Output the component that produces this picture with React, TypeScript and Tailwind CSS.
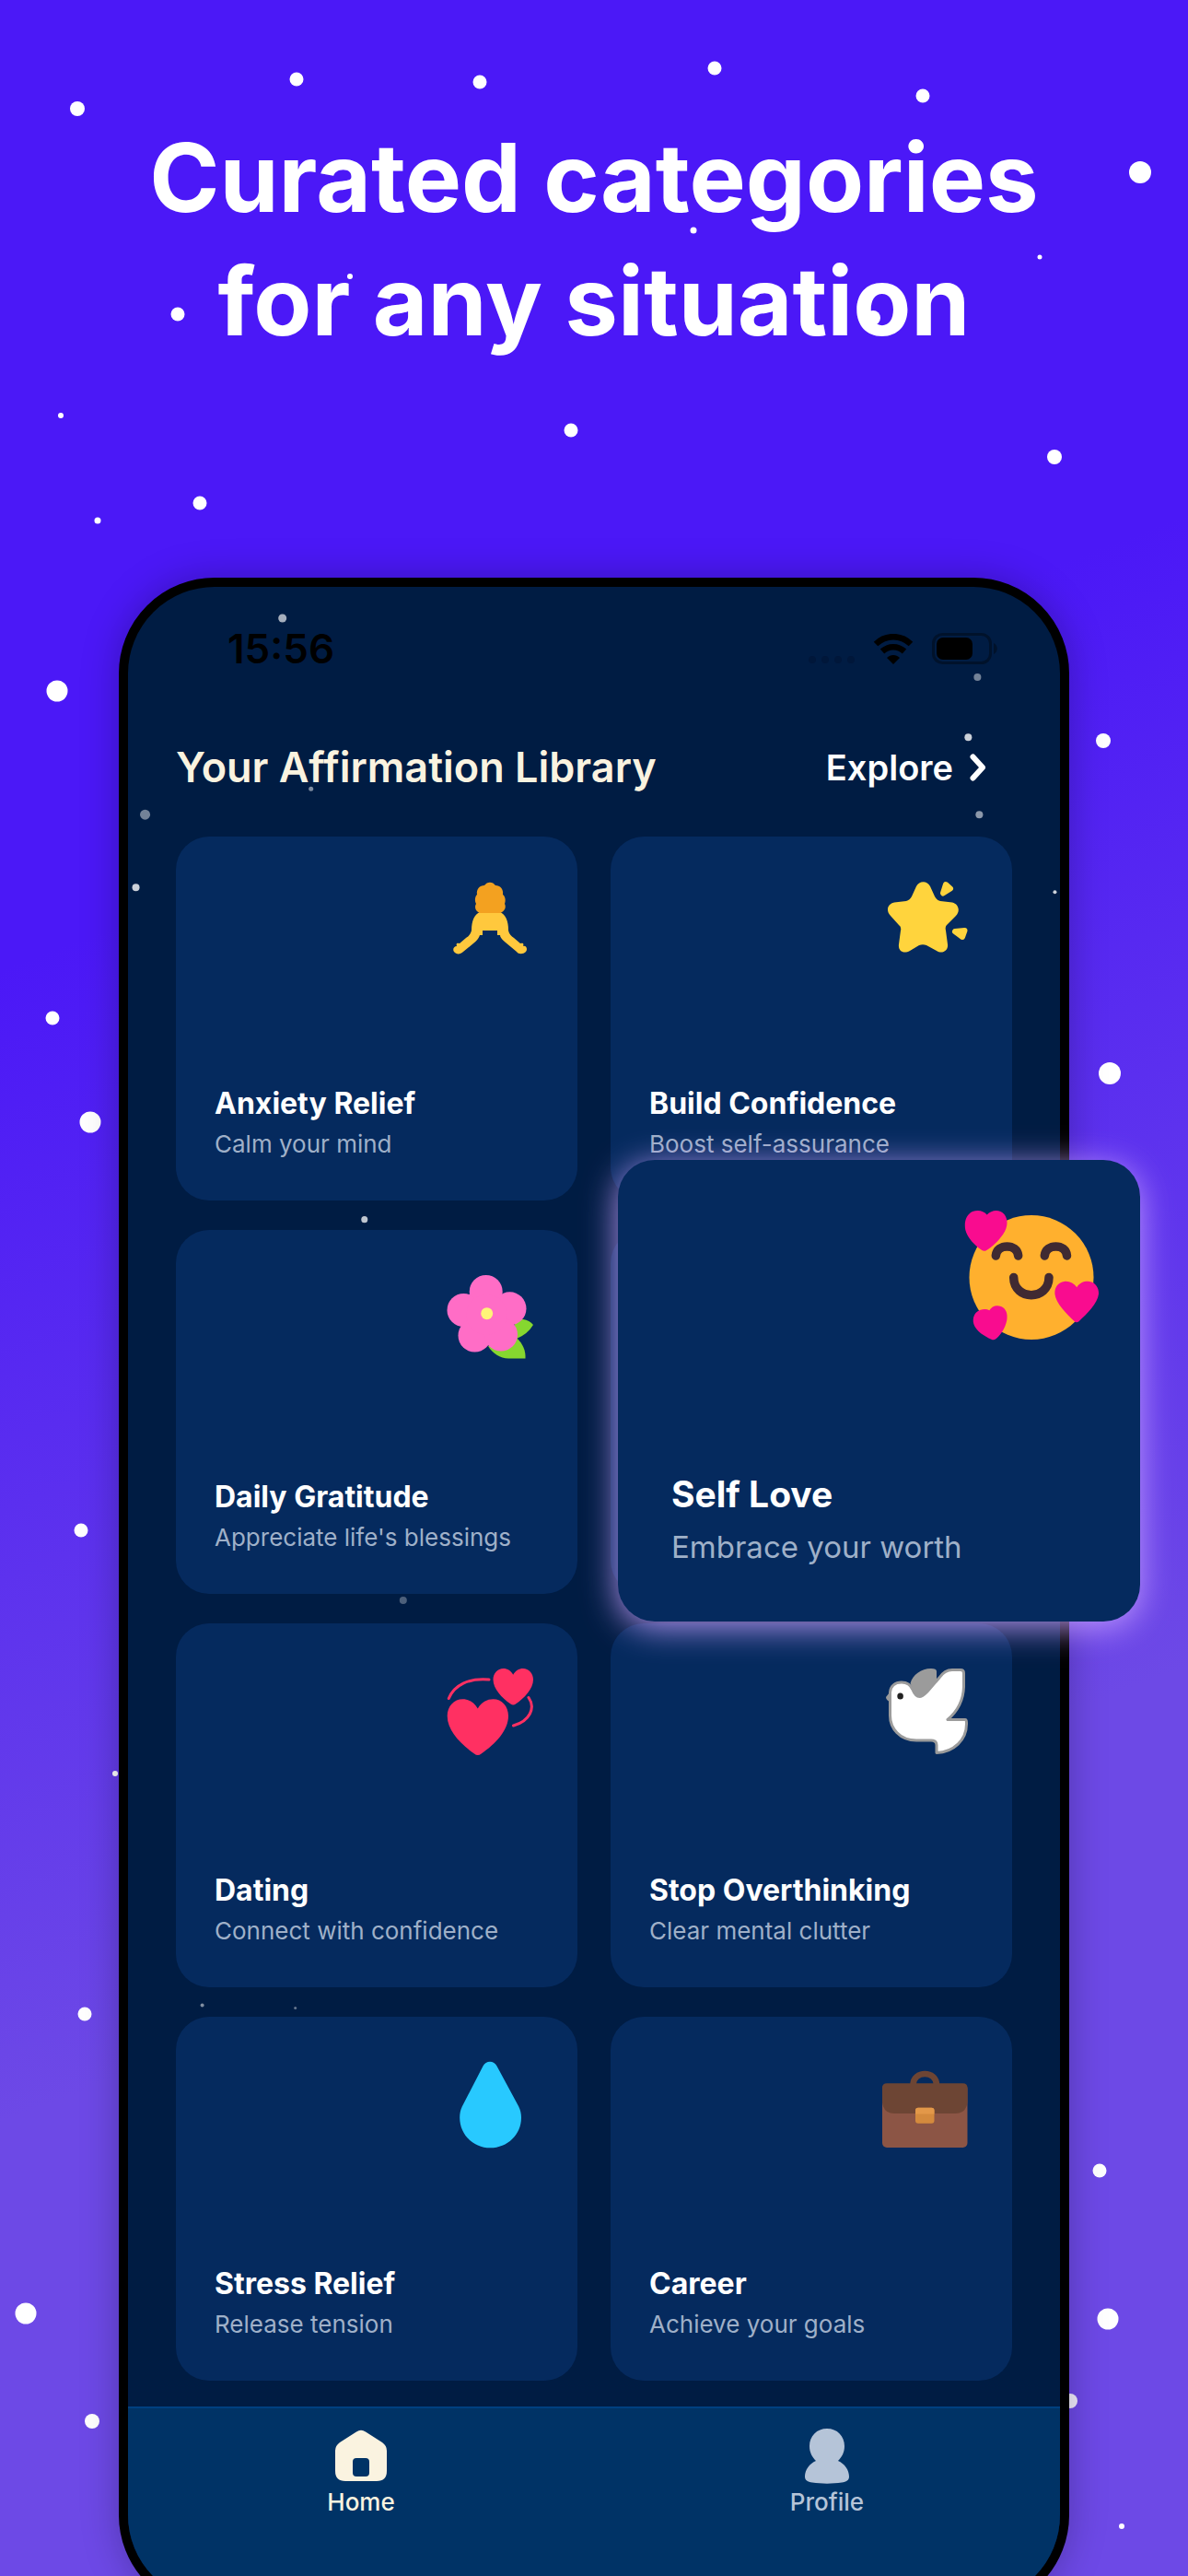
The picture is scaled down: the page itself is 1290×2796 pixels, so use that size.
import type { ReactNode } from "react";

type Star = [x: number, y: number, r: number, opacity?: number];

// x, y, radius on a 1290 x 2796 sky
const skyStars: Star[] = [
  [84, 118, 8],
  [322, 86, 7.5],
  [521, 89, 7.5],
  [776, 74, 7.5],
  [1002, 104, 7.5],
  [1238, 187, 12],
  [753, 250, 3.5],
  [1129, 279, 2.5],
  [380, 300, 3],
  [193, 341, 7.5],
  [948, 345, 8],
  [66, 451, 3],
  [620, 467, 7.5],
  [1145, 496, 8],
  [217, 546, 7.5],
  [106, 565, 3.5],
  [62, 750, 11.5],
  [1198, 804, 8],
  [57, 1105, 7.5],
  [98, 1218, 11.5],
  [1205, 1165, 12],
  [88, 1661, 7.5],
  [125, 1925, 3],
  [92, 2186, 7.5],
  [1194, 2356, 7.5],
  [1203, 2517, 11.5],
  [28, 2511, 11.5],
  [100, 2628, 8],
  [1162, 2606, 8, 0.9],
  [1218, 2742, 3],
];

const screenStars: Star[] = [
  [307, 671, 4.5, 0.65],
  [1061, 735, 4, 0.45],
  [1051, 800, 4, 0.8],
  [338, 856, 2.5, 0.5],
  [158, 884, 5.5, 0.45],
  [1063, 884, 4, 0.55],
  [148, 963, 4, 0.8],
  [1145, 968, 2, 0.8],
  [396, 1323, 3.5, 0.75],
  [438, 1736, 4, 0.3],
  [220, 2175, 2, 0.5],
  [321, 2178, 1.5, 0.4],
];

const Stars = ({ stars, viewBox }: { stars: Star[]; viewBox: string }) => (
  <svg
    className="pointer-events-none absolute inset-0 h-full w-full"
    viewBox={viewBox}
    preserveAspectRatio="xMidYMin slice"
    fill="#fff"
    aria-hidden="true"
  >
    {stars.map(([x, y, r, opacity = 1]) => (
      <circle key={`${x}-${y}`} cx={x} cy={y} r={r} opacity={opacity} />
    ))}
  </svg>
);

const Emoji = ({ children }: { children: ReactNode }) => (
  <svg className="size-[94px] self-end overflow-visible" viewBox="0 0 94 94" aria-hidden="true">
    {children}
  </svg>
);

const BowEmoji = () => (
  <Emoji>
    <path
      fill="#ffc83d"
      d="M36 34H58C64 37 67 43 67 54C68 58 70 60 73 62L80 68C83 67 84 68 83 71C87 70 88 75 86 77C83 80 78 80 76 77L64 67C60 64 58 61 58 59H55V54H39V59H36C35 62 33 65 29 68L18 77C15 80 11 80 9 78C6 76 7 71 11 71C10 68 11 67 14 68L21 62C24 60 26 58 27 54C27 43 30 37 36 34Z"
    />
    <path
      fill="#f3a120"
      d="M36 35C31 33 30 28 32 25C30 21 31 17 33 15C32 9 36 5 41 5C44 .5 50 .5 53 5C58 5 62 9 61 15C63.500 17 64.500 21 63 25C65 29 63 33 58 35Z"
    />
  </Emoji>
);

const StarEmoji = () => (
  <Emoji>
    <g fill="#ffd43d" stroke="#ffd43d" strokeLinejoin="round">
      <path
        strokeWidth="0"
        d="M38 6C41-.5 50-.5 53 6L58 17Q60 21 64 22L77 23.500C84 25 86 33 81 38L71 48Q69 50 70 54L72 69C73 76 66 80 60 76L49 70Q45 68.500 41 70L31 76C24 80 18 76 19 69L21 54Q22 50 19 48L10 38C4.500 32 7 25 14 23.500L27 22Q31 21 33 17Z"
      />
      <path strokeWidth="6" d="M70 4L75 8.500L67 13.500Z" />
      <path strokeWidth="6" d="M80 55L90.500 54L88 61Z" />
    </g>
  </Emoji>
);

const FlowerEmoji = () => (
  <Emoji>
    <path fill="#86d72f" d="M73 49H83Q90 50 94 55Q88 65 76 70Z" />
    <path fill="#86d72f" d="M45 78C50 86 58 91.500 67 91.500H85.500C86 83 83 76 76 69Z" />
    <g fill="#ff6dc6">
      <circle cx="42.700" cy="19" r="18" />
      <circle cx="68.500" cy="37.300" r="18" />
      <circle cx="18.500" cy="39" r="18" />
      <circle cx="30.500" cy="66.500" r="18" />
      <circle cx="59" cy="65.500" r="18" />
      <circle cx="43.500" cy="44" r="22" />
    </g>
    <circle cx="43.700" cy="42.700" r="6.500" fill="#fff478" />
  </Emoji>
);

const HeartsEmoji = () => (
  <Emoji>
    <path
      fill="#ff3062"
      d="M33.800 44.500C30 37.500 24 34.300 17.500 34.300C8 34.300 .7 42 .7 52.500C.7 68 15 83 30 93.500Q33.800 96.500 37.600 93.500C53 83 67 68 67 52.500C67 42 60 34.300 50.500 34.300C44 34.300 37.600 37.500 33.800 44.500Z"
    />
    <path
      fill="#ff3062"
      d="M72.200 7.800C70 3.500 66 1 61.500 1C55.500 1 50.500 6 50.500 13C50.500 23 60 33 69.500 39.500Q72.200 41.300 75 39.500C84.500 33 94 23 94 13C94 6 89 1 83 1C78.500 1 74.500 3.500 72.200 7.800Z"
    />
    <path
      d="M2.300 33.500C8 19 24 11 46 13M89 32.500C97 44 90 58 72.500 63"
      fill="none"
      stroke="#ff3062"
      strokeWidth="3"
      strokeLinecap="round"
    />
  </Emoji>
);

const DoveEmoji = () => (
  <Emoji>
    <path fill="#9b9b9b" d="M9 27L5 32Q5 35 9 37Z" />
    <path
      fill="#fff"
      stroke="#9b9b9b"
      strokeWidth="3"
      strokeLinejoin="round"
      d="M9.500 27C10 20 15 16 22 16C29 16 32 19 34 24C36 29 38 31.500 41.500 31.500C45 31.500 47 29 50 26L63 11C67 5 71 2.500 77 2.500H86Q89.500 2.500 89.500 6V21C89 36 82 48 72 56.500H91Q92.500 56.500 92.500 60C93 79 78 92 60 92.500V84Q60 79 54 79H38C20 79 9.500 66 9.500 52Z"
    />
    <path
      fill="#9b9b9b"
      d="M31.500 17C34 8 43 1 54 1Q60 1 60 4V14L50 26C47 29 45 31.500 41.500 31.500C38 31.500 36 28 31.500 17Z"
    />
    <ellipse cx="20.600" cy="31" rx="3.300" ry="3.500" fill="#212121" />
  </Emoji>
);

const DropEmoji = () => (
  <Emoji>
    <path
      fill="#28c9ff"
      d="M39.500 5.500C42.500-1 51.500-1 54.500 5.500L78 49C80 53 81 57 81 61.500C81 80 66 94.300 47.500 94.300S14.200 80 14.200 61.500C14.200 57 15 53 17 49Z"
    />
  </Emoji>
);

const BriefcaseEmoji = () => (
  <Emoji>
    <path d="M34.500 26C34.500 10 60 10 60 26" fill="none" stroke="#6d4534" strokeWidth="6.500" />
    <rect x="1" y="25" width="92.500" height="69" rx="5" fill="#8c5545" />
    <path fill="#6d4534" d="M6 24.300H88.500Q93.500 24.300 93.500 29.300V45Q92 57 80 57H14.500Q2.500 57 1 45V29.300Q1 24.300 6 24.300Z" />
    <rect x="37" y="50.700" width="20.500" height="17" rx="3" fill="#d48a3d" />
    <path fill="#e39849" d="M40 50.700H54.500Q57.500 50.700 57.500 53.700V57.500H37V53.700Q37 50.700 40 50.700Z" />
  </Emoji>
);

const LoveEmoji = () => (
  <svg className="size-[148px] self-end" viewBox="16 23 148 148" aria-hidden="true">
    <circle cx="90" cy="96.500" r="67.500" fill="#ffb02e" />
    <path
      d="M51.300 73C52.500 59.500 74.500 59.500 75.700 73M104.300 73C105.500 59.500 127.500 59.500 128.500 73M70.700 96.500C71 122 108.700 122 109 96.500"
      fill="none"
      stroke="#402a32"
      strokeWidth="9.500"
      strokeLinecap="round"
    />
    <g fill="#f90c8f">
      <path d="M41.700 28.500C47 22.500 56 22.500 60.500 28C65 34 64.500 42 59 50C54 57 47 64 40.500 67.500Q38 68.500 35.500 66.500C29 62 20.500 54 18.300 45C16.500 36 19.500 28 26 25C32 22.800 38 24 41.700 28.500Z" />
      <path d="M139.300 107.300C142.500 102 148 100.300 153 101C159.500 102 163.500 108 163 114.500C162 124.500 150 136.500 141.500 144.200Q139 146.200 136.700 144.200C128 136 116.500 124.500 115.400 114.500C115 107 119 102 125.500 101C131 100.300 136 102.500 139.300 107.300Z" />
      <path d="M44.300 132.300C47 127.500 52 126 57 128C62.500 130.300 64.500 136 63.300 143C61.500 152 56 160 51 163.500Q49 165 46.500 163.700C39 160.500 30 155 27.300 147C25.500 140 28.500 134 34 132C38 130.800 41.500 130.700 44.300 132.300Z" />
    </g>
  </svg>
);

interface Category {
  title: string;
  subtitle: string;
  emoji: ReactNode;
  highlighted?: boolean;
}

const categories: Category[] = [
  { title: "Anxiety Relief", subtitle: "Calm your mind", emoji: <BowEmoji /> },
  { title: "Build Confidence", subtitle: "Boost self-assurance", emoji: <StarEmoji /> },
  { title: "Daily Gratitude", subtitle: "Appreciate life's blessings", emoji: <FlowerEmoji /> },
  { title: "Self Love", subtitle: "Embrace your worth", emoji: <LoveEmoji />, highlighted: true },
  { title: "Dating", subtitle: "Connect with confidence", emoji: <HeartsEmoji /> },
  { title: "Stop Overthinking", subtitle: "Clear mental clutter", emoji: <DoveEmoji /> },
  { title: "Stress Relief", subtitle: "Release tension", emoji: <DropEmoji /> },
  { title: "Career", subtitle: "Achieve your goals", emoji: <BriefcaseEmoji /> },
];

const CategoryCard = ({ title, subtitle, emoji }: Category) => (
  <button
    type="button"
    className="flex h-[395px] flex-col justify-between rounded-[36px] bg-[#052a5e] pt-12 pr-12 pb-[43px] pl-[42px] text-left"
  >
    {emoji}
    <span className="flex flex-col gap-1">
      <span className="text-[32px] leading-[44px] font-bold text-white">{title}</span>
      <span className="text-[26px] leading-9 whitespace-nowrap text-[#9fb0c8]">{subtitle}</span>
    </span>
  </button>
);

// The picked card pops out of its own slot in the grid
const HighlightedCard = ({ title, subtitle, emoji }: Category) => (
  <div className="relative h-[395px] rounded-[36px] bg-[#052a5e]">
    <button
      type="button"
      className="absolute -top-[76px] left-2 z-10 flex h-[501px] w-[130%] flex-col justify-between rounded-[40px] bg-[#052a5e] pt-[54px] pr-11 pb-[58px] pl-[58px] text-left shadow-[0_6px_36px_rgba(200,160,255,0.9)]"
    >
      {emoji}
      <span className="flex flex-col gap-2">
        <span className="text-[39px] leading-[52px] font-bold text-white">{title}</span>
        <span className="text-[33px] leading-[46px] whitespace-nowrap text-[#9fb0c8]">{subtitle}</span>
      </span>
    </button>
  </div>
);

const StatusBar = () => (
  <div className="flex items-center justify-between pr-[67px] pl-[108px] text-black">
    <span className="text-[44px] leading-[54px] font-semibold">15:56</span>
    <div className="flex items-center gap-5">
      <svg className="h-9 w-[50px]" viewBox="0 0 50 36" fill="#00173a" aria-hidden="true">
        <circle cx="4" cy="30" r="4" />
        <circle cx="18" cy="30" r="4" />
        <circle cx="32" cy="30" r="4" />
        <circle cx="46" cy="30" r="4" />
      </svg>
      <svg className="h-[33px] w-11" viewBox="0 0 44 33" aria-hidden="true">
        <path d="M3 11C14 .5 30 .5 41 11" fill="none" stroke="#000" strokeWidth="6.500" />
        <path d="M10 19C17 12.500 27 12.500 34 19" fill="none" stroke="#000" strokeWidth="6.500" />
        <path d="M22 33L15 26C19 22 25 22 29 26Z" />
      </svg>
      <svg className="h-[34px] w-[72px]" viewBox="0 0 72 34" aria-hidden="true">
        <rect x="1.500" y="1.500" width="62" height="31" rx="10" fill="none" stroke="#00122b" strokeWidth="3" />
        <rect x="5" y="5" width="39" height="24" rx="7" />
        <path d="M67 11C72 13 72 21 67 23Z" fill="#00122b" />
      </svg>
    </div>
  </div>
);

const TabBar = () => (
  <nav className="grid h-[212px] grid-cols-2 rounded-b-[94px] border-t-2 border-[#004080] bg-[#003366] pt-[22px] text-[26px] leading-9 font-medium">
    <a href="#home" className="flex flex-col items-center gap-0.5 text-[#faf3e0]">
      <svg className="size-[60px]" viewBox="0 0 60 60" fill="currentColor" aria-hidden="true">
        <path
          fillRule="evenodd"
          d="M25 3.500Q30 0 35 3.500L53 15Q58 18.500 58 24V46Q58 57 47 57H13Q2 57 2 46V24Q2 18.500 7 15ZM25 32Q21 32 21 36V48Q21 52 25 52H35Q39 52 39 48V36Q39 32 35 32Z"
        />
      </svg>
      Home
    </a>
    <a href="#profile" className="flex flex-col items-center gap-0.5 text-[#b5c4d8]">
      <svg className="size-[60px]" viewBox="0 0 60 60" fill="currentColor" aria-hidden="true">
        <path d="M30 0C41 0 49 8 49 19C49 26 46 31 42 35C49 38 54 45 54 52C54 56 51 58 46 58.500C36 60 24 60 14 58.500C9 58 6 56 6 52C6 45 11 38 18 35C14 31 11 26 11 19C11 8 19 0 30 0Z" />
      </svg>
      Profile
    </a>
  </nav>
);

const App = () => {
  return (
    <main className="relative flex h-screen flex-col items-center overflow-hidden bg-[linear-gradient(159deg,#4b18f7_32%,#6d49e6_70%)] font-['Inter',sans-serif]">
      <Stars stars={skyStars} viewBox="0 0 1290 2796" />

      <h1 className="relative mt-[126px] text-center text-[103px] leading-[134px] font-bold text-white">
        Curated categories
        <br />
        for any situation
      </h1>

      <section className="relative mt-[233px] w-4/5 shrink-0 rounded-[104px] border-[10px] border-black bg-[#001c43] shadow-[0_0_40px_rgba(0,0,0,0.25)]">
        <Stars stars={screenStars} viewBox="139 637 1012 2185" />
        <div className="relative flex flex-col pt-10">
          <StatusBar />

          <header className="mt-[74px] flex items-center justify-between px-[52px]">
            <h2 className="text-[45px] leading-[56px] font-semibold text-[#faf3e0]">
              Your Affirmation Library
            </h2>
            <a href="#explore" className="flex items-center gap-[18px] pr-7 text-[38px] leading-[56px] font-semibold text-white">
              Explore
              <svg className="h-[30px] w-[18px]" viewBox="0 0 18 30" aria-hidden="true">
                <path
                  d="M3.500 3.500L14 15L3.500 26.500"
                  fill="none"
                  stroke="currentColor"
                  strokeWidth="6"
                  strokeLinecap="round"
                  strokeLinejoin="round"
                />
              </svg>
            </a>
          </header>

          <div className="mt-[47px] grid grid-cols-2 gap-x-9 gap-y-8 px-[52px]">
            {categories.map((category) =>
              category.highlighted ? (
                <HighlightedCard key={category.title} {...category} />
              ) : (
                <CategoryCard key={category.title} {...category} />
              )
            )}
          </div>

          <div className="mt-7">
            <TabBar />
          </div>
        </div>
      </section>
    </main>
  );
};

export default App;
